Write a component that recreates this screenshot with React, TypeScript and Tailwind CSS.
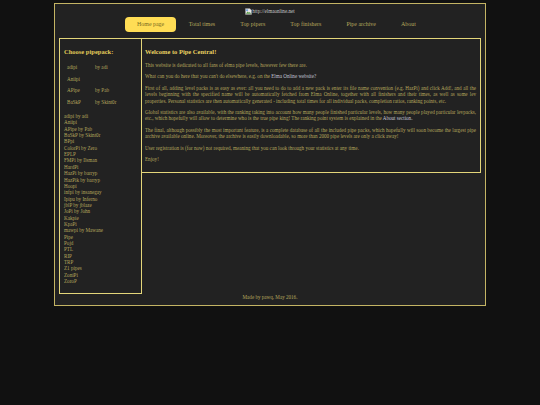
const navItems = ['Home page', 'Total times', 'Top pipers', 'Top finishers', 'Pipe archive', 'About']

const featured = [
  ['adipi', 'by adi'],
  ['Aniipi', ''],
  ['APipe', 'by Pab'],
  ['BaSkP', 'by Skint0r'],
]

const packs = [
  'adipi by adi',
  'Aniipi',
  'APipe by Pab',
  'BaSkP by Skint0r',
  'BPpi',
  'ColorPi by Zero',
  'EPLP',
  'FMPi by Ilsman',
  'HardPi',
  'HazPi by barryp',
  'HazPik by barryp',
  'Hoopi',
  'infpi by insanegay',
  'Ipipu by Inferno',
  'jblP by jblaze',
  'JoPi by John',
  'Kakpie',
  'KpaPi',
  'mawpi by Mawane',
  'Pipe',
  'Pojd',
  'PTL',
  'RIP',
  'TRP',
  'Z1 pipes',
  'ZoniPi',
  'ZoroP',
]

function BrokenImage() {
  return (
    <svg width="7" height="7" viewBox="0 0 16 16" className="shrink-0">
      <path d="M1 1h10l4 4v10H1z" fill="#e8e8e8" stroke="#8a8a8a" />
      <path d="M2 13l4-5 3 3 2-2 3 4z" fill="#5a9a4a" />
      <rect x="2" y="3" width="5" height="4" fill="#7fa8e0" />
    </svg>
  )
}

export default function App() {
  return (
    <div className="min-h-[405px] bg-[#111111] pt-[3px] font-['Liberation_Serif',serif] text-[5.1px] leading-[6.4px] text-[#b5a65c]">
      <div className="mx-auto h-[303px] w-[432px] border border-[#c4b464] bg-[#222222] px-[4px] pt-[3px]">
        <div className="flex h-[8px] items-center justify-center text-[#c8c8c8]">
          <BrokenImage />
          <span>http://elmaonline.net</span>
        </div>

        <nav className="mt-[-1px] flex h-[20px] items-center pl-[66px] text-[5.95px]">
          {navItems.map((item, i) => (
            <span
              key={item}
              className={
                i === 0
                  ? 'flex h-[15px] items-center rounded-[4px] bg-[#ffdd55] px-[12px] text-[#7a6a20]'
                  : 'flex h-[15px] items-center px-[12.5px]'
              }
            >
              {item}
            </span>
          ))}
        </nav>

        <div className="mt-[4px] flex items-start">
          <aside className="h-[256px] w-[83px] shrink-0 border border-[#e4d67a] pl-[4px] pt-[9px]">
            <h2 className="text-[6.5px] font-bold leading-[8px] text-[#e0c858]">Choose pipepack:</h2>
            <div className="mt-[6px] pl-[3px]">
              {featured.map(([name, author]) => (
                <div key={name} className="flex h-[11.4px] items-center">
                  <span className="w-[28px]">{name}</span>
                  <span>{author}</span>
                </div>
              ))}
            </div>
            <ul className="mt-[5.5px] leading-[6.35px]">
              {packs.map((pack) => (
                <li key={pack}>{pack}</li>
              ))}
            </ul>
          </aside>

          <main className="h-[135px] flex-1 border border-l-0 border-[#e4d67a] pl-[3px] pr-[4px] pt-[9px]">
            <h1 className="text-[6.5px] font-bold leading-[8px] text-[#e8d060]">Welcome to Pipe Central!</h1>
            <p className="mt-[6px]">This website is dedicated to all fans of elma pipe levels, however few there are.</p>
            <p className="mt-[5px]">
              What can you do here that you can't do elsewhere, e.g. on the{' '}
              <span className="text-[#c4c4d4]">Elma Online website?</span>
            </p>
            <p className="mt-[5px] text-justify">
              First of all, adding level packs is as easy as ever: all you need to do to add a new pack is enter its file
              name convention (e.g. HazPi) and click Add!, and all the levels beginning with the specified name will be
              automatically fetched from Elma Online, together with all finishers and their times, as well as some lev
              properties. Personal statistics are then automatically generated - including total times for all individual
              packs, completion ratios, ranking points, etc.
            </p>
            <p className="mt-[5px] text-justify">
              Global statistics are also available, with the ranking taking into account how many people finished
              particular levels, how many people played particular levpacks, etc., which hopefully will allow to determine
              who is the true pipe king! The ranking point system is explained in the{' '}
              <span className="text-[#c4c4d4]">About section.</span>
            </p>
            <p className="mt-[5px] text-justify">
              The final, although possibly the most important feature, is a complete database of all the included pipe
              packs, which hopefully will soon become the largest pipe archive available online. Moreover, the archive is
              easily downloadable, so more than 2000 pipe levels are only a click away!
            </p>
            <p className="mt-[5px]">
              User registration is (for now) not required, meaning that you can look through your statistics at any time.
            </p>
            <p className="mt-[5px]">Enjoy!</p>
          </main>
        </div>

        <footer className="text-center">Made by pawq, May 2016.</footer>
      </div>
    </div>
  )
}
